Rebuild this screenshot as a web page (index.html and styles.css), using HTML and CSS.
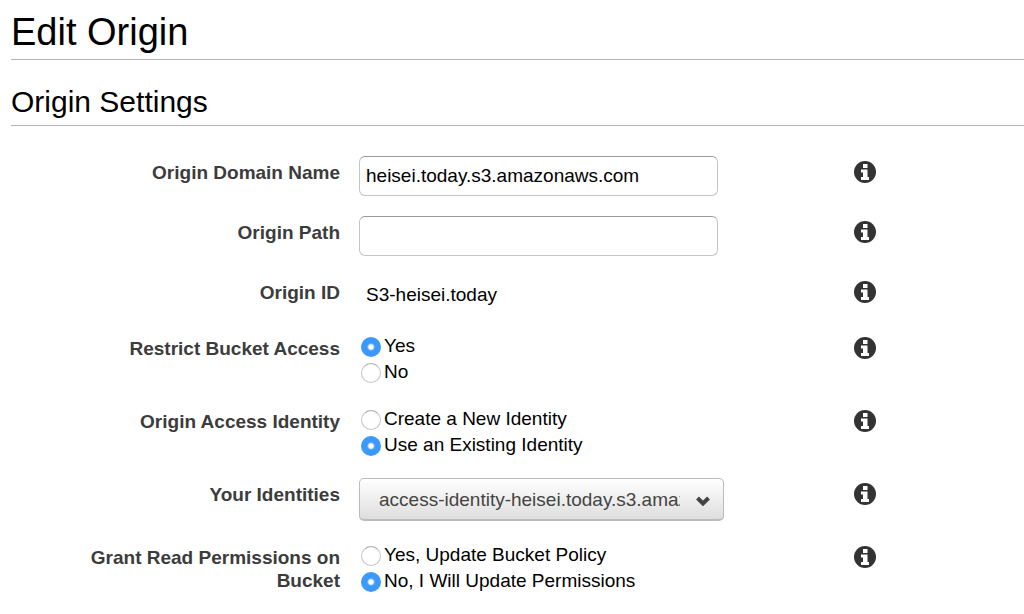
FILE: index.html
```html
<!DOCTYPE html>
<html lang="en">
<head>
    <meta charset="UTF-8">
    <meta name="viewport" content="width=device-width, initial-scale=1.0">
    <title>Edit Origin</title>
    <link rel="stylesheet" href="styles.css">
</head>
<body>
    <svg width="0" height="0" class="sprite">
        <symbol id="info" viewBox="0 0 22 22">
            <circle cx="11" cy="11" r="11" fill="#333"/>
            <path d="M9 3h4.500v4H9zM7 8.500h6.500V16H15v3H7v-3h2v-4.500H7z" fill="#fff"/>
        </symbol>
    </svg>

    <h1>Edit Origin</h1>
    <h2>Origin Settings</h2>

    <form class="settings">
        <div class="row">
            <label class="name" for="domain">Origin Domain Name</label>
            <div class="field">
                <input type="text" class="text" id="domain" value="heisei.today.s3.amazonaws.com">
            </div>
            <button type="button" class="info" aria-label="Help"><svg><use href="#info"/></svg></button>
        </div>

        <div class="row">
            <label class="name" for="path">Origin Path</label>
            <div class="field">
                <input type="text" class="text" id="path">
            </div>
            <button type="button" class="info" aria-label="Help"><svg><use href="#info"/></svg></button>
        </div>

        <div class="row">
            <span class="name">Origin ID</span>
            <div class="field value">S3-heisei.today</div>
            <button type="button" class="info" aria-label="Help"><svg><use href="#info"/></svg></button>
        </div>

        <div class="row" role="radiogroup" aria-labelledby="restrict">
            <span class="name" id="restrict">Restrict Bucket Access</span>
            <div class="field options">
                <label class="option"><input type="radio" name="restrict" checked>Yes</label>
                <label class="option"><input type="radio" name="restrict">No</label>
            </div>
            <button type="button" class="info" aria-label="Help"><svg><use href="#info"/></svg></button>
        </div>

        <div class="row" role="radiogroup" aria-labelledby="identity">
            <span class="name" id="identity">Origin Access Identity</span>
            <div class="field options">
                <label class="option"><input type="radio" name="identity">Create a New Identity</label>
                <label class="option"><input type="radio" name="identity" checked>Use an Existing Identity</label>
            </div>
            <button type="button" class="info" aria-label="Help"><svg><use href="#info"/></svg></button>
        </div>

        <div class="row">
            <label class="name" for="identities">Your Identities</label>
            <div class="field">
                <div class="select-box">
                    <select id="identities">
                        <option>access-identity-heisei.today.s3.amazonaws.com</option>
                    </select>
                    <svg class="arrow" viewBox="0 0 14 10"><path d="M1.500 2l5.500 5.500L12.500 2" fill="none" stroke="#444" stroke-width="4"/></svg>
                </div>
            </div>
            <button type="button" class="info" aria-label="Help"><svg><use href="#info"/></svg></button>
        </div>

        <div class="row" role="radiogroup" aria-labelledby="grant">
            <span class="name" id="grant">Grant Read Permissions on Bucket</span>
            <div class="field options">
                <label class="option"><input type="radio" name="grant">Yes, Update Bucket Policy</label>
                <label class="option"><input type="radio" name="grant" checked>No, I Will Update Permissions</label>
            </div>
            <button type="button" class="info" aria-label="Help"><svg><use href="#info"/></svg></button>
        </div>
    </form>
</body>
</html>
```

FILE: styles.css
```css
* {
    box-sizing: border-box;
}

body {
    margin: 0;
    padding: 8px 0 0 11px;
    background-color: #fff;
    color: #000;
    font-family: "Liberation Sans", Arial, sans-serif;
    font-size: 19px;
    line-height: 23px;
}

.sprite {
    position: absolute;
}

h1,
h2 {
    margin: 0;
    border-bottom: 1px solid #b4b4b4;
    font-weight: normal;
}

h1 {
    padding-bottom: 3px;
    font-size: 38px;
    line-height: 48px;
}

h2 {
    margin-top: 22px;
    padding-bottom: 3px;
    font-size: 30px;
    line-height: 40px;
}

.settings {
    display: flex;
    flex-direction: column;
    gap: 20px;
    padding: 30px 0 16px;
}

.row {
    display: grid;
    grid-template-columns: 329px minmax(0, 476px) 22px;
    column-gap: 19px;
    align-items: start;
}

.name {
    padding-top: 5px;
    padding-left: 60px;
    color: #3c3c3c;
    font-weight: bold;
    text-align: right;
}

.text {
    display: block;
    width: 100%;
    max-width: 359px;
    height: 40px;
    padding: 0 6px;
    border: 1px solid #c4c4c4;
    border-top-color: #999;
    border-radius: 6px;
    background-color: #fff;
    color: #000;
    font: inherit;
}

.value {
    padding: 7px 7px 6px;
}

.options {
    min-height: 53px;
}

/* circles sit slightly below the middle of their text */
.option {
    display: flex;
    align-items: flex-start;
    gap: 3px;
    height: 26px;
    padding-top: 2px;
    padding-left: 2px;
}

.option input {
    appearance: none;
    width: 20px;
    height: 20px;
    margin: 3px 0 0;
    border: 1px solid #c4c4c4;
    border-top-color: #aaa;
    border-radius: 50%;
    background-color: #fff;
}

.option input:checked {
    border: none;
    background: radial-gradient(circle, #fff 2px, #3b99fc 4px);
}

.select-box {
    position: relative;
    max-width: 365px;
}

select {
    appearance: none;
    display: block;
    width: 100%;
    height: 43px;
    padding: 0 43px 0 19px;
    border: 1px solid #bbb;
    border-bottom-width: 2px;
    border-radius: 5px;
    background: linear-gradient(#fff, #dedede);
    color: #444;
    font: inherit;
}

.arrow {
    position: absolute;
    top: 18px;
    right: 14px;
    width: 14px;
    height: 10px;
    pointer-events: none;
}

.info {
    width: 22px;
    height: 22px;
    margin-top: 5px;
    padding: 0;
    border: none;
    background: none;
    cursor: pointer;
}

.info svg {
    display: block;
    width: 22px;
    height: 22px;
}
```
